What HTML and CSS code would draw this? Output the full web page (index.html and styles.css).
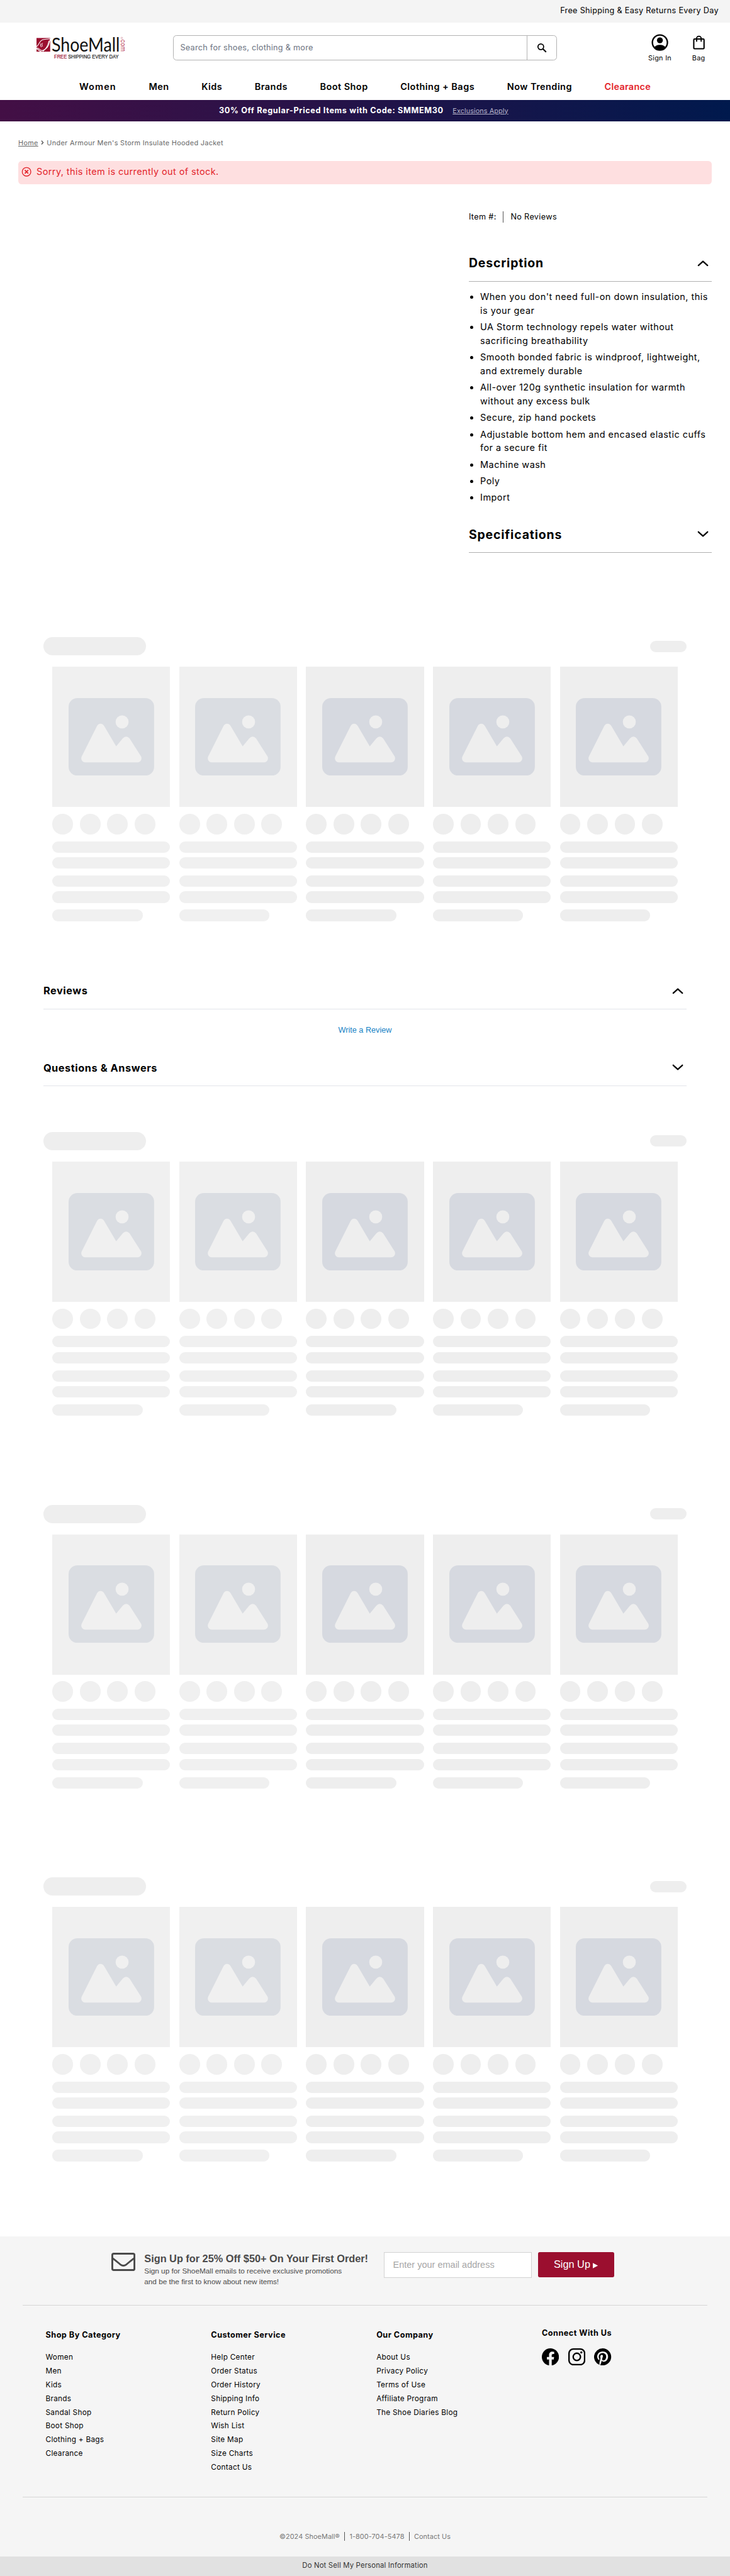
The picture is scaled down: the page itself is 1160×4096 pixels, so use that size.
FILE: index.html
```html
<!DOCTYPE html>
<html lang="en">
<head>
<meta charset="utf-8">
<title>Under Armour Men's Storm Insulate Hooded Jacket | ShoeMall</title>
<link rel="stylesheet" href="styles.css">
</head>
<body>
<svg class="defs" width="0" height="0" aria-hidden="true">
  <symbol id="picture" viewBox="0 0 150 136">
    <rect width="150" height="136" rx="15.5" fill="currentColor"/>
    <g class="cutout">
      <circle cx="93.8" cy="41.8" r="11.4"/>
      <path d="M22.9 102.5 49.6 49.4Q51.8 45 56 45T62.6 49.4L83.4 84.6 94.8 70.8Q101 64.6 107 70.8L127.2 102.5C129.3 107.5 126 112.7 120.6 112.7H29.5C24.2 112.7 20.8 107.5 22.9 102.5Z"/>
    </g>
  </symbol>
  <symbol id="chevron-up" viewBox="0 0 20 12"><path d="M2 10 10 2.8 18 10" fill="none" stroke="#000" stroke-width="2.5" stroke-linecap="round" stroke-linejoin="round"/></symbol>
  <symbol id="chevron-down" viewBox="0 0 20 12"><path d="M2 2 10 9.2 18 2" fill="none" stroke="#000" stroke-width="2.5" stroke-linecap="round" stroke-linejoin="round"/></symbol>
</svg>
<div class="page">
  <div class="topbar">Free Shipping &amp; Easy Returns Every Day</div>
  <header class="masthead">
    <svg class="logo" viewBox="64 50 160 60" width="160" height="60">
      <rect x="64" y="67" width="24" height="24" fill="#9b0f2f"/>
      <path d="M64 82C67 81 69 73 74 70.5S83 70 88 67.8M64 86C68 87 69 91 73 91M88 69C86 78 85 83 79 87L75 90.5M64 84.5C69 84 70 90 75 89S84 80 86 72" fill="none" stroke="#fff" stroke-width="1.2"/>
      <path d="M72 76.5q-2.5 3 .5 6.500M74.500 76q-2 3 0 6" fill="none" stroke="#fff" stroke-width="1.1"/>
      <text class="logo-name" x="90.5" y="90.7" textLength="119.5" lengthAdjust="spacingAndGlyphs">ShoeMall</text>
      <text class="logo-com" transform="translate(211.8 69.5) rotate(90)" textLength="21.5" lengthAdjust="spacingAndGlyphs">com</text>
      <circle cx="213.6" cy="67" r="1.3" fill="none" stroke="#c06a7c" stroke-width=".6"/>
      <text class="logo-tag" x="95" y="103" textLength="113" lengthAdjust="spacingAndGlyphs"><tspan class="logo-free">FREE</tspan> SHIPPING EVERY DAY</text>
    </svg>
    <div class="search">
      <span class="search-field">Search for shoes, clothing &amp; more</span>
      <span class="search-button"><svg width="18" height="18" viewBox="0 0 18 18"><circle cx="7" cy="7" r="5" fill="none" stroke="#000" stroke-width="1.9"/><path d="M10.7 10.7 16.3 16.3" stroke="#000" stroke-width="2.3"/></svg></span>
    </div>
    <div class="tools">
      <div class="tool">
        <svg width="30" height="30" viewBox="0 0 30 30"><circle cx="15" cy="15" r="13.2" fill="none" stroke="#000" stroke-width="2.6"/><circle cx="15" cy="11.2" r="5.2"/><path d="M4.500 23.800C7 20.500 11 19 15 19s8 1.500 10.500 4.800A14 14 0 0 1 4.500 23.800Z"/></svg>
        <span>Sign In</span>
      </div>
      <div class="tool">
        <svg width="30" height="30" viewBox="0 0 30 30"><rect x="6" y="8.8" width="18" height="17.2" rx="1.5" fill="none" stroke="#000" stroke-width="2.3"/><path d="M11 13.500V8a4 4 0 0 1 8 0v5.500" fill="none" stroke="#000" stroke-width="2.1"/></svg>
        <span>Bag</span>
      </div>
    </div>
  </header>
  <nav class="nav">
    <a class="spread">Women</a><a>Men</a><a>Kids</a><a>Brands</a><a>Boot Shop</a><a>Clothing + Bags</a><a>Now Trending</a><a class="sale">Clearance</a>
  </nav>
  <div class="promo"><strong>30% Off Regular-Priced Items with Code: SMMEM30</strong><a>Exclusions Apply</a></div>
  <div class="crumbs"><a>Home</a><svg width="5" height="8" viewBox="0 0 5 8"><path d="M1 .8 4 4 1 7.200" fill="none" stroke="#444" stroke-width="1.3"/></svg><span>Under Armour Men's Storm Insulate Hooded Jacket</span></div>
  <div class="alert">
    <svg width="18" height="18" viewBox="0 0 18 18" fill="none" stroke="#e3242b"><circle cx="9" cy="9" r="7.5" stroke-width="1.5"/><path d="M6 6 12 12M12 6 6 12" stroke-width="1.9"/></svg>
    <span>Sorry, this item is currently out of stock.</span>
  </div>
  <section class="product">
    <div class="meta"><span>Item #:</span><span class="meta-reviews">No Reviews</span></div>
    <h2 class="panel"><span>Description</span><svg width="20" height="12"><use href="#chevron-up"/></svg></h2>
    <ul class="features">
      <li>When you don't need full-on down insulation, this is your gear</li>
      <li>UA Storm technology repels water without sacrificing breathability</li>
      <li>Smooth bonded fabric is windproof, lightweight, and extremely durable</li>
      <li>All-over 120g synthetic insulation for warmth without any excess bulk</li>
      <li>Secure, zip hand pockets</li>
      <li>Adjustable bottom hem and encased elastic cuffs for a secure fit</li>
      <li>Machine wash</li>
      <li>Poly</li>
      <li>Import</li>
    </ul>
    <h2 class="panel"><span>Specifications</span><svg width="20" height="12"><use href="#chevron-down"/></svg></h2>
  </section>
  <section class="carousel carousel-first"></section>
  <section class="feedback">
    <h3 class="fold"><span>Reviews</span><svg width="20" height="12"><use href="#chevron-up"/></svg></h3>
    <a class="write">Write a Review</a>
    <h3 class="fold"><span>Questions &amp; Answers</span><svg width="20" height="12"><use href="#chevron-down"/></svg></h3>
  </section>
  <section class="carousel carousel-second"></section>
  <section class="carousel"></section>
  <section class="carousel"></section>
  <footer class="footer">
    <div class="signup">
      <svg class="mail" width="42" height="32" viewBox="0 0 42 32" fill="none" stroke="#4a4a4a" stroke-width="3.2" stroke-linejoin="round"><rect x="1.6" y="1.6" width="38.8" height="28.8" rx="2.5"/><path d="M2 9.500C8 14 12 17.500 16 20.800Q21 24.600 26 20.800C30 17.500 34 14 40 9.500"/></svg>
      <div class="pitch">
        <strong>Sign Up for 25% Off $50+ On Your First Order!</strong>
        <p>Sign up for ShoeMall emails to receive exclusive promotions<br>and be the first to know about new items!</p>
      </div>
      <div class="email">Enter your email address</div>
      <div class="submit">Sign Up<svg width="9" height="10" viewBox="0 0 9 10"><path d="M0 .3 9 5 0 9.700Z" fill="#fff"/></svg></div>
    </div>
    <div class="columns">
      <div class="column"><h4>Shop By Category</h4><a>Women</a><a>Men</a><a>Kids</a><a>Brands</a><a>Sandal Shop</a><a>Boot Shop</a><a>Clothing + Bags</a><a>Clearance</a></div>
      <div class="column"><h4>Customer Service</h4><a>Help Center</a><a>Order Status</a><a>Order History</a><a>Shipping Info</a><a>Return Policy</a><a>Wish List</a><a>Site Map</a><a>Size Charts</a><a>Contact Us</a></div>
      <div class="column"><h4>Our Company</h4><a>About Us</a><a>Privacy Policy</a><a>Terms of Use</a><a>Affiliate Program</a><a>The Shoe Diaries Blog</a></div>
      <div class="column connect"><h4>Connect With Us</h4>
        <div class="social">
          <svg width="30" height="30" viewBox="0 0 16 16"><path d="M16 8.049c0-4.446-3.582-8.050-8-8.050C3.580 0-.002 3.603-.002 8.050c0 4.017 2.926 7.347 6.750 7.951v-5.625h-2.030V8.050H6.750V6.275c0-2.017 1.195-3.131 3.022-3.131.876 0 1.791.157 1.791.157v1.980h-1.009c-.993 0-1.303.621-1.303 1.258v1.510h2.218l-.354 2.326H9.250V16c3.824-.604 6.750-3.934 6.750-7.951z"/></svg>
          <svg width="30" height="30" viewBox="0 0 30 30"><rect x="1.3" y="1.3" width="27.4" height="27.4" rx="7.5" fill="none" stroke="#000" stroke-width="2.6"/><circle cx="15" cy="15" r="6.4" fill="none" stroke="#000" stroke-width="2.6"/><circle cx="22.9" cy="7.1" r="1.9"/></svg>
          <svg width="30" height="30" viewBox="0 0 16 16"><path d="M8 0a8 8 0 0 0-2.915 15.452c-.070-.633-.134-1.606.027-2.297.146-.625.938-3.977.938-3.977s-.239-.479-.239-1.187c0-1.113.645-1.943 1.448-1.943.682 0 1.012.512 1.012 1.127 0 .686-.437 1.712-.663 2.663-.188.796.4 1.446 1.185 1.446 1.422 0 2.515-1.500 2.515-3.664 0-1.915-1.377-3.254-3.342-3.254-2.276 0-3.612 1.707-3.612 3.471 0 .688.265 1.425.595 1.826a.24.24 0 0 1 .056.23c-.061.252-.196.796-.222.907-.035.146-.116.177-.268.107-1-.465-1.624-1.926-1.624-3.100 0-2.523 1.834-4.840 5.286-4.840 2.775 0 4.932 1.977 4.932 4.620 0 2.757-1.739 4.976-4.151 4.976-.811 0-1.573-.421-1.834-.919l-.498 1.902c-.181.695-.669 1.566-.995 2.097A8 8 0 1 0 8 0z"/></svg>
        </div>
      </div>
    </div>
    <div class="legal"><span>©2024 ShoeMall®</span><span class="phone">1-800-704-5478</span><span>Contact Us</span></div>
    <div class="privacy">Do Not Sell My Personal Information</div>
  </footer>
</div>
<script src="carousel.js"></script>
</body>
</html>
```
FILE: carousel.js
```js
// Fills every carousel with its loading placeholders.
const card = `
  <div class="card">
    <div class="thumb"><svg width="150" height="136"><use href="#picture"/></svg></div>
    <div class="swatches"><i></i><i></i><i></i><i></i></div>
    <div class="lines"><i></i><i></i></div>
    <div class="lines"><i></i><i></i></div>
    <div class="lines"><i class="short"></i></div>
  </div>`;

document.querySelectorAll('.carousel').forEach((section) => {
  section.innerHTML = `
    <div class="carousel-head"><i class="title"></i><i class="more"></i></div>
    <div class="cards">${card.repeat(5)}</div>`;
});
```
FILE: styles.css
```css
* { box-sizing: border-box; }

html { background: #fff; }

body {
  margin: 0;
  zoom: 0.90625;
  font-family: Inter, "Open Sans", sans-serif;
  color: #000;
}

h2, h3, h4, p, ul { margin: 0; padding: 0; }
svg { display: block; flex: none; }
.defs { position: absolute; }

.page { width: 1280px; display: flex; flex-direction: column; }

.topbar {
  height: 40px;
  padding: 0 20px 2px 0;
  background: #f4f4f4;
  font-size: 14px;
  line-height: 38px;
  letter-spacing: .33px;
  text-align: right;
}

.masthead { display: flex; align-items: flex-start; height: 90px; padding-left: 64px; }
.logo { margin-top: 10px; overflow: visible; }
.logo-name { font: 400 35px Lato, sans-serif; fill: #111; }
.logo-com { font: 400 12px Inter, sans-serif; fill: #b02a48; }
.logo-tag { font: 400 9.5px "Liberation Sans", sans-serif; fill: #222; stroke: #222; stroke-width: .25px; }
.logo-free { fill: #9b0f2f; stroke: #9b0f2f; }

.search {
  display: flex;
  width: 674px;
  height: 44px;
  margin: 22px 0 0 79px;
  border: 1px solid #b3b3b3;
  border-radius: 6px;
}
.search-field {
  flex: 1;
  padding-left: 12px;
  color: #6b7280;
  font-size: 14px;
  line-height: 42px;
  letter-spacing: .28px;
}
.search-button {
  display: flex;
  align-items: center;
  justify-content: center;
  width: 52px;
  border-left: 1px solid #b3b3b3;
}

.tools { display: flex; gap: 18px; margin: 20px 0 0 155px; }
.tool {
  display: flex;
  flex-direction: column;
  align-items: center;
  width: 50px;
  font-size: 12px;
  line-height: 20px;
  letter-spacing: .3px;
}
.tool span { margin-top: 2px; }

.nav {
  display: flex;
  justify-content: space-between;
  height: 45px;
  padding: 0 139px;
  font-size: 16px;
  font-weight: 600;
  line-height: 44px;
  letter-spacing: .5px;
}
.nav .spread { letter-spacing: 1.2px; }
.nav .sale { color: #e3242b; letter-spacing: .25px; }

.promo {
  display: flex;
  gap: 16px;
  height: 38px;
  padding-left: 384px;
  background: linear-gradient(90deg, #430f45, #221349 50%, #00194d);
  color: #fff;
  font-size: 14px;
  line-height: 38px;
}
.promo strong { font-weight: 700; letter-spacing: .72px; }
.promo a { color: #b9b6cc; font-size: 12px; letter-spacing: .09px; text-decoration: underline; }

.crumbs {
  display: flex;
  align-items: center;
  gap: 5px;
  margin: 27px 0 0 32px;
  color: #666;
  font-size: 12px;
  line-height: 20px;
  letter-spacing: .36px;
}
.crumbs a { text-decoration: underline; }

.alert {
  display: flex;
  gap: 9px;
  height: 40px;
  margin: 23px 32px 0;
  padding-left: 5px;
  border-radius: 6px;
  background: #fedfe0;
  color: #e3242b;
  font-size: 16px;
  line-height: 38px;
  letter-spacing: .42px;
}
.alert svg { margin-top: 9px; }

.product { width: 426px; margin: 48px 32px 0 auto; }
.meta { display: flex; font-size: 14px; line-height: 20px; letter-spacing: .37px; }
.meta-reviews { margin-left: 11px; padding-left: 13px; border-left: 1px solid #555; }
.panel {
  display: flex;
  align-items: center;
  justify-content: space-between;
  height: 64px;
  padding-right: 5px;
  border-bottom: 1px solid #b0b0b0;
  font-size: 21.5px;
  font-weight: 700;
  letter-spacing: .9px;
}
.meta + .panel { margin-top: 39px; }
.features {
  display: grid;
  gap: 5px;
  margin: 15px 0 21px 20px;
  font-size: 16px;
  line-height: 24px;
  letter-spacing: .49px;
}

.carousel { height: 498px; margin: 156px 76px 0; }
.carousel-first { margin-top: 148px; }
.carousel-second { margin-top: 80px; }
.carousel i { display: block; background: #eee; border-radius: 10px; }
.carousel-head { display: flex; align-items: center; justify-content: space-between; height: 32px; }
.carousel-head .title { width: 180px; height: 32px; border-radius: 16px; }
.carousel-head .more { width: 64px; height: 20px; }
.cards { display: grid; grid-template-columns: repeat(5, 1fr); gap: 16px; padding: 20px 16px 0; }
.card { --tone: #eee; color: #d6d9e0; }
.card:nth-child(-n+2) { --tone: #f0f0f0; color: #dadde2; }
.card i, .card .thumb { background: var(--tone); }
.cutout { fill: var(--tone); }
.thumb { display: flex; align-items: center; justify-content: center; height: 246px; }
.swatches { display: flex; gap: 12px; margin-top: 12px; }
.swatches i { width: 36px; height: 36px; border-radius: 50%; }
.lines { display: grid; gap: 8px; margin-top: 12px; }
.lines i { height: 20px; }
.lines .short { width: 158px; }

.feedback { display: flex; flex-direction: column; margin: 91px 76px 0; }
.fold {
  display: flex;
  align-items: center;
  justify-content: space-between;
  height: 64px;
  padding-right: 6px;
  border-bottom: 1px solid #e3e5ea;
  font-size: 18px;
  font-weight: 700;
  letter-spacing: .62px;
}
.write {
  margin: 26px 0 25px;
  color: #1782c5;
  font: 14px/20px "Liberation Sans", Arial, sans-serif;
  text-align: center;
}

.footer { margin-top: 132px; background: #f5f5f5; }
.signup {
  display: flex;
  align-items: flex-start;
  height: 121px;
  margin: 0 40px;
  padding: 27px 0 0 155px;
  border-bottom: 1px solid #d6d6d6;
  color: #4a4a4a;
  font-family: "Liberation Sans", Arial, sans-serif;
}
.mail { margin-top: 2px; }
.pitch { width: 420px; margin: 1px 0 0 16px; font-size: 13px; line-height: 18.5px; }
.pitch strong { display: block; margin-bottom: 2px; font-size: 18px; line-height: 22px; }
.email {
  width: 259px;
  height: 46px;
  padding-left: 15px;
  border: 1px solid #d3d3d3;
  background: #fff;
  color: #a6a6a6;
  font-size: 16px;
  line-height: 44px;
}
.submit {
  display: flex;
  align-items: center;
  justify-content: center;
  gap: 5px;
  width: 134px;
  height: 45px;
  margin-left: 11px;
  border-radius: 3px;
  background: #9b0f2f;
  color: #fff;
  font-size: 18px;
}
.submit svg { margin-top: 3px; }

.columns {
  display: grid;
  grid-template-columns: repeat(4, 290px);
  height: 337px;
  margin: 0 40px;
  padding: 42px 0 0 40px;
  border-bottom: 1px solid #d6d6d6;
}
.column a { display: block; font-size: 13px; line-height: 24.07px; letter-spacing: .32px; }
.column h4 { margin-bottom: 18px; font-size: 14px; line-height: 20px; letter-spacing: .52px; }
.connect { margin-top: -3px; }
.connect h4 { margin-bottom: 16px; }
.social { display: flex; gap: 16px; }

.legal {
  display: flex;
  justify-content: center;
  height: 104px;
  padding-top: 60px;
  color: #777;
  font-size: 12px;
  line-height: 16px;
  letter-spacing: .1px;
}
.legal span { height: 16px; }
.legal .phone { margin: 0 8px; padding: 0 8px; border: solid #555; border-width: 0 1px; }

.privacy {
  height: 33.6px;
  padding-top: 5px;
  background: #e1e1e1;
  color: #333;
  font-size: 12.5px;
  line-height: 20px;
  letter-spacing: .19px;
  text-align: center;
}
```
